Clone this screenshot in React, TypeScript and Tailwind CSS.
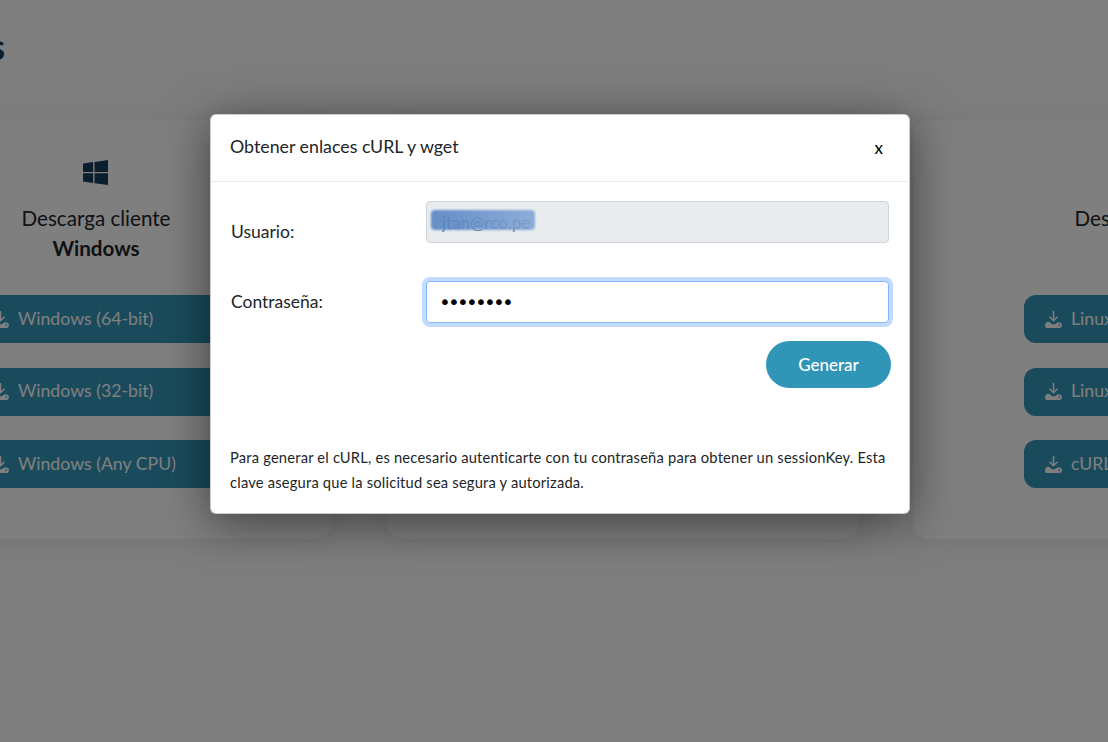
const sans = { fontFamily: "Lato, 'Noto Sans', sans-serif" };

function WindowsIcon() {
  return (
    <svg viewBox="0 0 26 26" className="w-[25px] h-[25px] mr-px text-[#173c5c]" fill="currentColor">
      <path d="M0 3.700 10.600 2.200V12.400H0ZM12 2 26 0V12.400H12ZM0 13.700H10.600V24L0 22.400ZM12 13.700H26V26L12 24.100Z" />
    </svg>
  );
}

function DownloadIcon() {
  return (
    <svg viewBox="0 0 18 18" className="w-[17px] h-[17px] shrink-0" fill="currentColor">
      <path d="M8.200 0h1.600v8.400l2.900-2.900 1.100 1.100L9 11.400 4.200 6.600l1.100-1.100 2.900 2.900z" />
      <path fillRule="evenodd" d="M3 11.500h1.200L7.500 14h3l2.300-1.800h2.700c1.400 0 2.500 1.100 2.500 2.500S16.900 18 15.500 18h-13C1.100 18 0 16.900 0 15.500 0 14 1.300 11.500 3 11.500zM15 14a.9.900 0 1 0 0 1.800.9.900 0 0 0 0-1.800z" />
    </svg>
  );
}

function DownloadButton({ label }: { label: string }) {
  return (
    <button className="h-12 w-full flex items-center gap-[9px] pl-[21px] rounded-xl bg-[#3396b8] text-white text-[17.7px] whitespace-nowrap overflow-hidden">
      <DownloadIcon />
      {label}
    </button>
  );
}

function DownloadCard({ os, buttons }: { os: string; buttons: string[] }) {
  return (
    <div className="w-[472px] shrink-0 h-[419px] rounded-2xl bg-white shadow-[0_4px_24px_rgba(0,0,0,0.07)] px-[111px] pt-[40px] flex flex-col items-center text-[#212529]">
      <WindowsIcon />
      <p className="mt-[18px] text-[20.6px] leading-[30px] whitespace-nowrap">Descarga cliente</p>
      <p className="text-[20.6px] leading-[30px] font-bold">{os}</p>
      <div className="mt-[32px] w-full flex flex-col gap-[24.500px]">
        {buttons.map((b) => (
          <DownloadButton key={b} label={b} />
        ))}
      </div>
    </div>
  );
}

export default function App() {
  return (
    <div style={sans} className="relative w-[1108px] h-[742px] overflow-hidden bg-[#fcfcfc]">
      <div className="ml-[-140px] w-[1525px]">
        <div className="h-[120px] pt-[24px] w-[145px] flex justify-end items-start">
          <h1 className="text-[36px] leading-[44px] font-bold text-[#173c5c] whitespace-nowrap">Descargas</h1>
        </div>
        <div className="flex gap-[54.500px]">
          <DownloadCard os="Windows" buttons={["Windows (64-bit)", "Windows (32-bit)", "Windows (Any CPU)"]} />
          <div className="w-[472px] shrink-0 h-[419px] rounded-2xl bg-white shadow-[0_4px_24px_rgba(0,0,0,0.07)]" />
          <DownloadCard os="Linux" buttons={["Linux (64-bit)", "Linux (ARM)", "cURL y wget"]} />
        </div>
      </div>

      <div className="absolute inset-0 bg-black/50" />

      <div className="absolute left-[210px] top-[114px] w-[700px] h-[400px] bg-white rounded-md border border-black/20 shadow-[0_8px_48px_rgba(0,0,0,0.5)] text-[#212529]">
        <div className="h-[67px] flex items-center justify-between pl-[19px] pr-[26px] border-b border-[#e9ecef]">
          <h2 className="text-[17.800px] leading-6 -mt-[4px]">Obtener enlaces cURL y wget</h2>
          <span className="text-[17px] leading-none text-black -mt-[2px]">x</span>
        </div>

        <div className="pl-5 pr-5 pt-[19px]">
          <div className="flex items-start">
            <label className="w-[195px] text-[17.500px] leading-[26px] mt-[18px]">Usuario:</label>
            <div className="relative w-[463px]">
              <input
                disabled
                value="jtan@rco.pe"
                className="w-full h-[42px] pl-[15px] rounded border border-[#ced4da] bg-[#e9ecef] text-[#7b8797] text-[17px]"
              />
              <div className="absolute left-[5px] top-[9px] w-[104px] h-[20px] rounded-sm bg-gradient-to-r from-[#4f7fc0] to-[#7ea3d4] opacity-85 blur-[1px]" />
            </div>
          </div>

          <div className="flex items-center mt-[36px]">
            <label className="w-[195px] text-[17.500px]">Contraseña:</label>
            <input
              type="password"
              value="12345678"
              readOnly
              style={{ fontFamily: "'DejaVu Sans', sans-serif" }}
              className="w-[463px] h-[42px] px-3 rounded border border-[#86b7fe] bg-white text-black text-[20px] tracking-[-2.800px] shadow-[0_0_0_4px_rgba(13,110,253,0.25)] outline-none"
            />
          </div>

          <div className="flex justify-end mt-[18px] mr-[-2px]">
            <button className="w-[125px] h-[47px] rounded-full bg-[#3195b7] text-white text-[17px] font-medium">Generar</button>
          </div>

          <p className="mt-[57px] mr-[-4px] -ml-px text-[14.700px] leading-[25px] tracking-[0.2px]">
            Para generar el cURL, es necesario autenticarte con tu contraseña para obtener un sessionKey. Esta clave asegura que la solicitud sea segura y autorizada.
          </p>
        </div>
      </div>
    </div>
  );
}
